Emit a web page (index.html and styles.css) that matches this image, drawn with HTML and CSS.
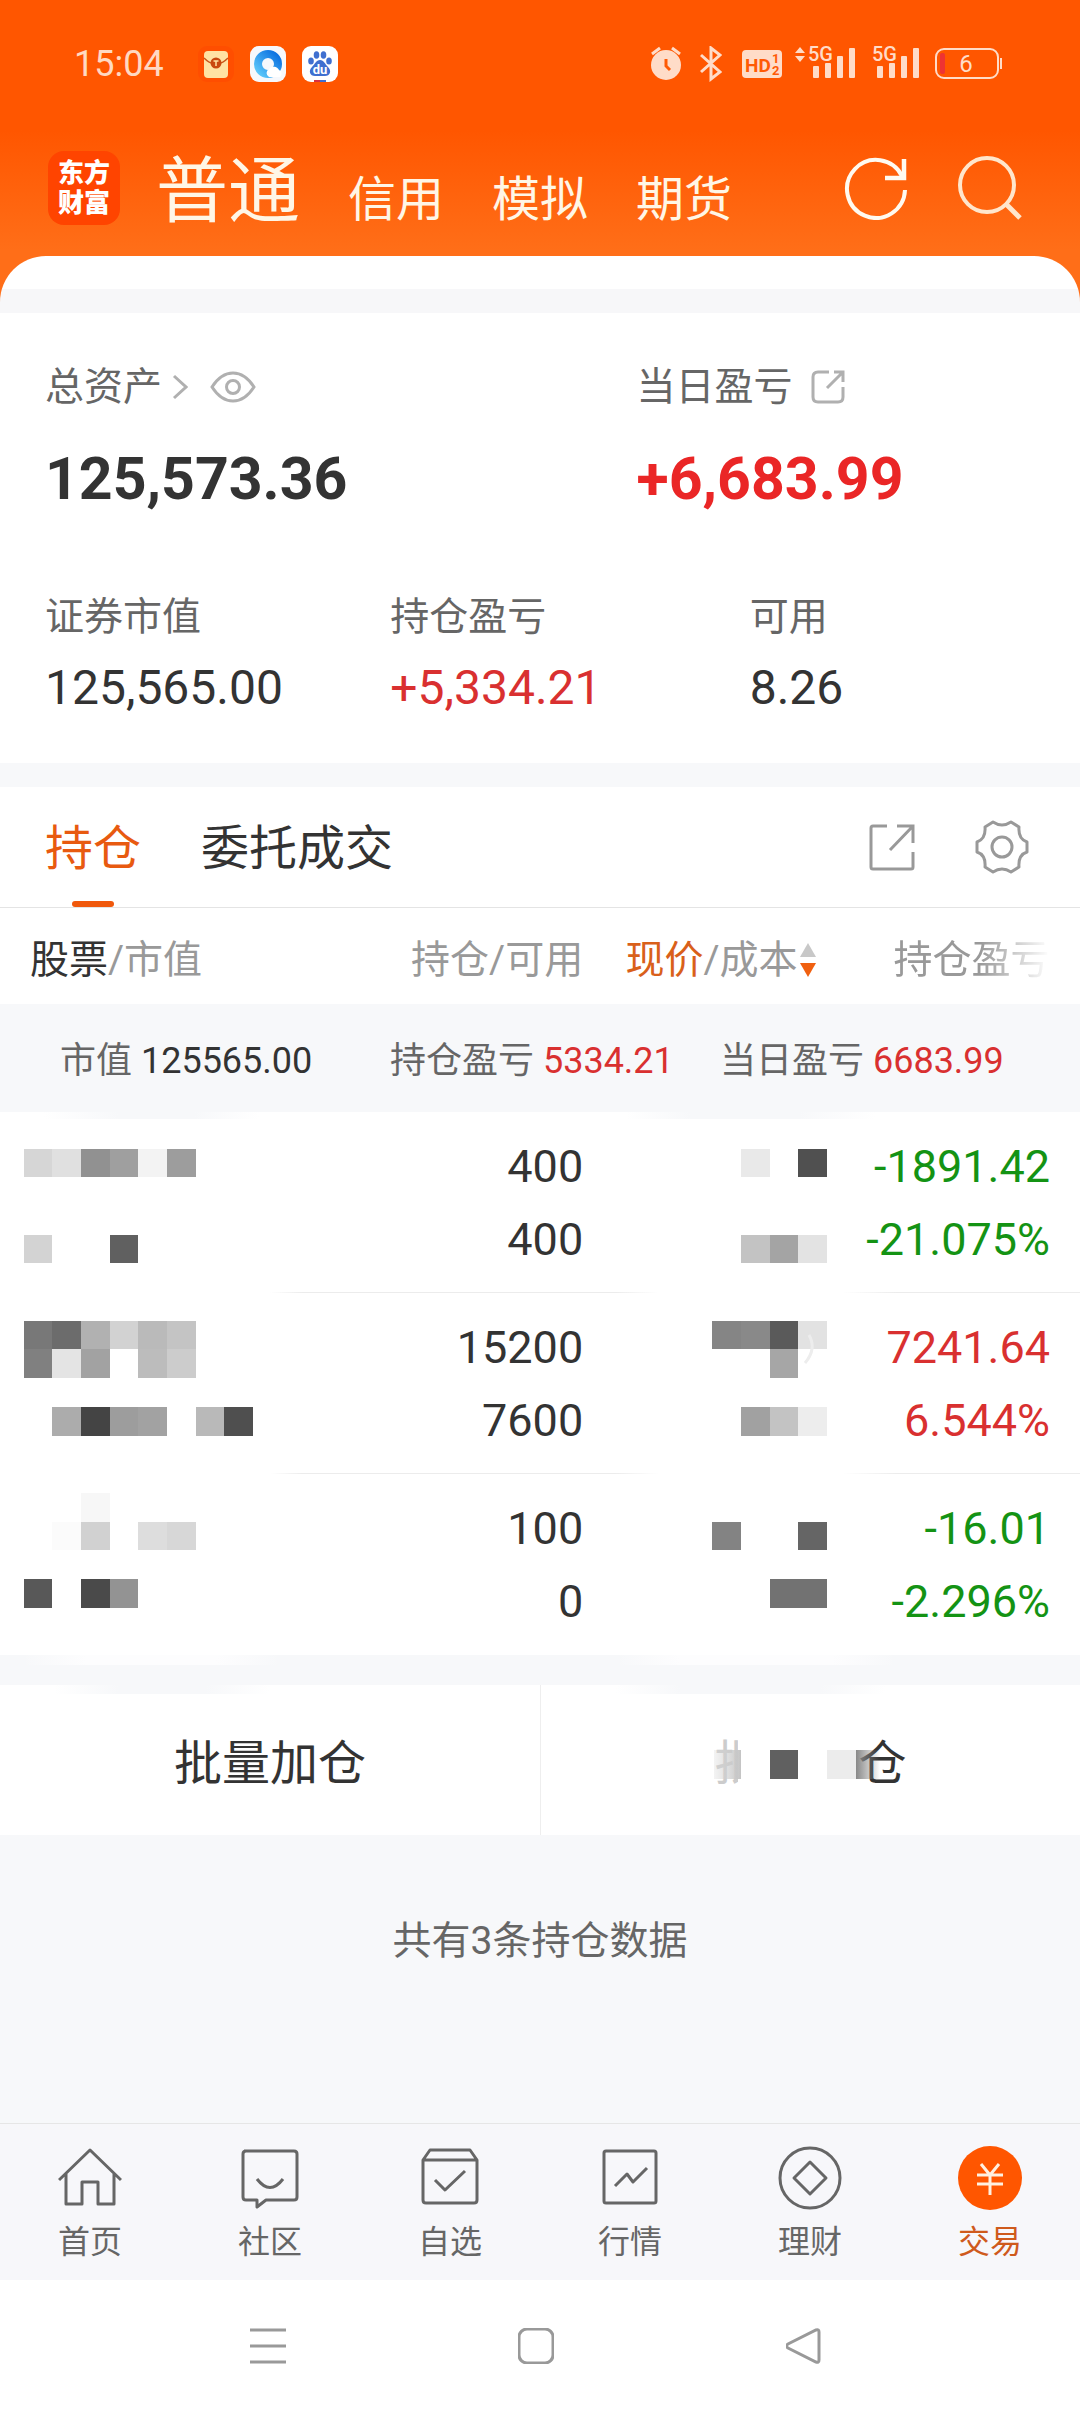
FILE: index.html
```html
<!DOCTYPE html>
<html lang="zh-CN">
<head>
    <meta charset="UTF-8">
    <meta name="viewport" content="width=device-width, initial-scale=1.0">
    <title>普通交易</title>
    <link rel="stylesheet" href="styles.css">
</head>
<body>
    <header class="top">
        <div class="status">
            <span class="clock">15:04</span>
            <div class="apps">
                <svg width="36" height="36" viewBox="0 0 36 36">
                    <rect width="36" height="36" rx="9" fill="#ff4e00"/>
                    <rect x="6" y="5" width="24" height="27" rx="4" fill="#ffe2a3"/>
                    <path d="M6 12q7 7 12 5q5 2 12-5" fill="none" stroke="#c9551a" stroke-width="1.5"/>
                    <circle cx="18" cy="17" r="5.5" fill="#c9480f"/>
                    <path d="M15.500 15h5M18 15v5" stroke="#ffe2a3" stroke-width="1.5"/>
                </svg>
                <svg width="36" height="36" viewBox="0 0 36 36">
                    <defs>
                        <linearGradient id="qq" x1="0" y1="1" x2="1" y2="0">
                            <stop offset="0" stop-color="#5cc8fa"/>
                            <stop offset="1" stop-color="#0a6fe0"/>
                        </linearGradient>
                    </defs>
                    <rect width="36" height="36" rx="9" fill="#f6f8fc"/>
                    <circle cx="18" cy="18" r="10" fill="none" stroke="url(#qq)" stroke-width="8"/>
                    <path d="M19 31a4.500 4.500 0 0 1 0-8a6 6 0 0 1 10 1a4 4 0 0 1 1 7z" fill="#fff"/>
                </svg>
                <svg width="36" height="36" viewBox="0 0 36 36">
                    <rect width="36" height="36" rx="9" fill="#fff"/>
                    <g fill="#3f6fd0">
                        <ellipse cx="9" cy="15" rx="2.800" ry="3.600"/>
                        <ellipse cx="14.500" cy="9" rx="2.800" ry="3.800"/>
                        <ellipse cx="21.500" cy="9" rx="2.800" ry="3.800"/>
                        <ellipse cx="27" cy="15" rx="2.800" ry="3.600"/>
                        <path d="M18 14c4 0 5 4 8 7c4 4 2 9-3 9H13c-5 0-7-5-3-9c3-3 4-7 8-7z"/>
                    </g>
                    <text x="18" y="28" class="du">du</text>
                    <path d="M12 35h6" stroke="#d83040" stroke-width="2"/>
                    <path d="M18 35h6" stroke="#3f6fd0" stroke-width="2"/>
                </svg>
            </div>
            <div class="signals">
                <svg width="32" height="36" viewBox="0 0 32 36">
                    <circle cx="16" cy="19" r="15" fill="#ffdcc8"/>
                    <path d="M2 8l8-6M30 8l-8-6" stroke="#ffdcc8" stroke-width="3"/>
                    <path d="M16 13v7l4 4" fill="none" stroke="#ff5a05" stroke-width="3"/>
                </svg>
                <svg width="22" height="36" viewBox="0 0 22 36">
                    <path d="M1 9l19 17-9 7V2l9 7L1 26" fill="none" stroke="#ffdcc8" stroke-width="3"/>
                </svg>
                <svg class="hd" width="40" height="36" viewBox="0 0 40 36">
                    <rect y="4" width="40" height="28" rx="4" fill="#ffdcc8"/>
                    <text x="3" y="26" class="hd-text">HD</text>
                    <text x="30" y="17" class="hd-num">1</text>
                    <text x="30" y="29" class="hd-num">2</text>
                </svg>
                <svg width="62" height="46" viewBox="0 -5 62 46">
                    <g fill="#ffdcc8">
                        <path d="M1 7l5-6 5 6zM1 10h10l-5 6z"/>
                        <rect x="19" y="20" width="6" height="12" rx="1"/>
                        <rect x="31" y="17" width="6" height="15" rx="1"/>
                        <rect x="43" y="10" width="6" height="22" rx="1"/>
                        <rect x="55" y="2" width="6" height="30" rx="1"/>
                    </g>
                    <text x="14" y="15" class="net">5G</text>
                </svg>
                <svg class="sim2" width="50" height="46" viewBox="12 -5 50 46">
                    <g fill="#ffdcc8">
                        <rect x="19" y="20" width="6" height="12" rx="1"/>
                        <rect x="31" y="17" width="6" height="15" rx="1"/>
                        <rect x="43" y="10" width="6" height="22" rx="1"/>
                        <rect x="55" y="2" width="6" height="30" rx="1"/>
                    </g>
                    <text x="14" y="15" class="net">5G</text>
                </svg>
                <svg width="68" height="36" viewBox="0 0 68 36">
                    <rect x="1" y="3" width="62" height="29" rx="8" fill="none" stroke="#ffdcc8" stroke-width="2"/>
                    <rect x="5" y="7" width="5" height="21" rx="2" fill="#ee3333"/>
                    <rect x="65" y="12" width="2" height="11" fill="#ffdcc8"/>
                    <text x="31" y="26" class="battery">6</text>
                </svg>
            </div>
        </div>
        <nav class="accounts">
            <div class="logo"><span>东方</span><span>财富</span></div>
            <div class="account-list">
                <a class="current" href="#">普通</a>
                <a href="#">信用</a>
                <a href="#">模拟</a>
                <a href="#">期货</a>
            </div>
            <button class="icon-btn">
                <svg width="64" height="64" viewBox="0 0 64 64" fill="none" stroke="#fffaf0" stroke-width="4">
                    <path d="M61 34a29 29 0 1 1-3-14"/>
                    <path d="M60 3v19H41" stroke-width="4.500"/>
                </svg>
            </button>
            <button class="icon-btn">
                <svg width="64" height="64" viewBox="0 0 64 64" fill="none" stroke="#ffe6cc" stroke-width="4">
                    <circle cx="29" cy="29" r="27"/>
                    <path d="M48 48l14 14" stroke-width="5"/>
                </svg>
            </button>
        </nav>
    </header>

    <main>
        <div class="sheet-top"></div>
        <section class="assets">
            <div class="totals">
                <div>
                    <div class="label">总资产
                        <svg class="chevron" width="16" height="26" viewBox="0 0 16 26"><path d="M2 2l12 11L2 24" fill="none" stroke="#b0b0b0" stroke-width="3"/></svg>
                        <svg class="eye" width="46" height="32" viewBox="0 0 46 32" fill="none" stroke="#b0b0b0" stroke-width="3">
                            <path d="M2 16Q11 2 23 2t21 14Q35 30 23 30T2 16z"/>
                            <circle cx="23" cy="16" r="6.500"/>
                        </svg>
                    </div>
                    <div class="big">125,573.36</div>
                </div>
                <div>
                    <div class="label">当日盈亏
                        <svg class="share" width="34" height="34" viewBox="0 0 34 34" fill="none" stroke="#b0b0b0" stroke-width="3">
                            <path d="M18 2H7Q2 2 2 7v20q0 5 5 5h20q5 0 5-5V17M16 18L31 3M23 2h9v10"/>
                        </svg>
                    </div>
                    <div class="big up">+6,683.99</div>
                </div>
            </div>
            <div class="details">
                <div>
                    <div class="label">证券市值</div>
                    <div class="value">125,565.00</div>
                </div>
                <div>
                    <div class="label">持仓盈亏</div>
                    <div class="value up">+5,334.21</div>
                </div>
                <div>
                    <div class="label">可用</div>
                    <div class="value">8.26</div>
                </div>
            </div>
        </section>

        <section class="holdings">
            <div class="tabs">
                <a class="tab active" href="#">持仓</a>
                <a class="tab" href="#">委托成交</a>
                <button class="icon-btn">
                    <svg width="46" height="48" viewBox="0 0 46 48" fill="none" stroke="#999" stroke-width="3">
                        <path d="M18 3H4Q2 3 2 5v39q0 2 2 2h38q2 0 2-2V29M21 27L44 3M28 3h16v17"/>
                    </svg>
                </button>
                <button class="icon-btn">
                    <svg width="54" height="54" viewBox="0 0 54 54" fill="none" stroke="#999" stroke-width="3" stroke-linejoin="round">
                        <path d="M18 2Q27 8 36 2L44 7Q43 19 52 22V32Q43 35 44 47L36 52Q27 46 18 52L10 47Q11 35 2 32V22Q11 19 10 7z"/>
                        <circle cx="27" cy="27" r="10"/>
                    </svg>
                </button>
            </div>
            <table>
                <colgroup>
                    <col class="col-name">
                    <col class="col-qty">
                    <col class="col-price">
                    <col>
                </colgroup>
                <thead>
                    <tr>
                        <th class="name"><b>股票</b>/市值</th>
                        <th>持仓/可用</th>
                        <th class="price"><em>现价</em>/成本<svg class="sort" width="16" height="36" viewBox="0 0 16 36"><path d="M0 15L8 1l8 14z" fill="#c8c8c8"/><path d="M0 21h16L8 35z" fill="#f06010"/></svg></th>
                        <th class="profit"><span>持仓盈亏</span></th>
                    </tr>
                </thead>
                <tbody>
                    <tr class="sum">
                        <td colspan="4">
                            <div class="sum-row">
                                <div>市值 <span>125565.00</span></div>
                                <div>持仓盈亏 <span class="up">5334.21</span></div>
                                <div>当日盈亏 <span class="up">6683.99</span></div>
                            </div>
                        </td>
                    </tr>
                    <tr class="stock first">
                        <td class="name">
                            <svg class="mosaic" width="232" height="180" viewBox="0 0 232 180" shape-rendering="crispEdges">
                                <rect x="0" y="36" width="28" height="28" fill="#d6d6d6"/>
                                <rect x="28" y="36" width="29" height="28" fill="#e0e0e0"/>
                                <rect x="57" y="36" width="29" height="28" fill="#919191"/>
                                <rect x="86" y="36" width="28" height="28" fill="#9f9f9f"/>
                                <rect x="114" y="36" width="29" height="28" fill="#f3f3f3"/>
                                <rect x="143" y="36" width="29" height="28" fill="#9d9d9d"/>
                                <rect x="0" y="122" width="28" height="28" fill="#d3d3d3"/>
                                <rect x="86" y="122" width="28" height="28" fill="#606060"/>
                            </svg>
                        </td>
                        <td>400<br>400</td>
                        <td class="price">
                            <svg class="mosaic" width="115" height="180" viewBox="0 0 115 180" shape-rendering="crispEdges">
                                <rect x="29" y="36" width="29" height="28" fill="#e9e9e9"/>
                                <rect x="86" y="36" width="29" height="28" fill="#505050"/>
                                <rect x="29" y="122" width="29" height="28" fill="#c3c3c3"/>
                                <rect x="58" y="122" width="28" height="28" fill="#a4a4a4"/>
                                <rect x="86" y="122" width="29" height="28" fill="#e3e3e3"/>
                            </svg>
                        </td>
                        <td class="profit down">-1891.42<br>-21.075%</td>
                    </tr>
                    <tr class="stock">
                        <td class="name">
                            <svg class="mosaic" width="232" height="180" viewBox="0 0 232 180" shape-rendering="crispEdges">
                                <rect x="0" y="27" width="28" height="28" fill="#787878"/>
                                <rect x="28" y="27" width="29" height="28" fill="#6c6c6c"/>
                                <rect x="57" y="27" width="29" height="28" fill="#b1b1b1"/>
                                <rect x="86" y="27" width="28" height="28" fill="#d2d2d2"/>
                                <rect x="114" y="27" width="29" height="28" fill="#bababa"/>
                                <rect x="143" y="27" width="29" height="28" fill="#c4c4c4"/>
                                <rect x="0" y="55" width="28" height="29" fill="#808080"/>
                                <rect x="28" y="55" width="29" height="29" fill="#e4e4e4"/>
                                <rect x="57" y="55" width="29" height="29" fill="#a2a2a2"/>
                                <rect x="114" y="55" width="29" height="29" fill="#bcbcbc"/>
                                <rect x="143" y="55" width="29" height="29" fill="#cccccc"/>
                                <rect x="28" y="113" width="29" height="29" fill="#acacac"/>
                                <rect x="57" y="113" width="29" height="29" fill="#444"/>
                                <rect x="86" y="113" width="28" height="29" fill="#9d9d9d"/>
                                <rect x="114" y="113" width="29" height="29" fill="#a2a2a2"/>
                                <rect x="172" y="113" width="28" height="29" fill="#b9b9b9"/>
                                <rect x="200" y="113" width="29" height="29" fill="#4f4f4f"/>
                            </svg>
                        </td>
                        <td>15200<br>7600</td>
                        <td class="price">
                            <svg class="mosaic" width="115" height="180" viewBox="0 0 115 180">
                                <rect x="0" y="27" width="29" height="28" fill="#858585"/>
                                <rect x="29" y="27" width="29" height="28" fill="#898989"/>
                                <rect x="58" y="27" width="28" height="28" fill="#5a5a5a"/>
                                <rect x="86" y="27" width="29" height="28" fill="#e2e2e2"/>
                                <rect x="58" y="55" width="28" height="29" fill="#a6a6a6"/>
                                <path d="M97 41q8 14-4 28" fill="none" stroke="#ededed" stroke-width="3"/>
                                <rect x="29" y="113" width="29" height="29" fill="#a1a1a1"/>
                                <rect x="58" y="113" width="28" height="29" fill="#c3c3c3"/>
                                <rect x="86" y="113" width="29" height="29" fill="#ededed"/>
                            </svg>
                        </td>
                        <td class="profit up">7241.64<br>6.544%</td>
                    </tr>
                    <tr class="stock last">
                        <td class="name">
                            <svg class="mosaic" width="232" height="180" viewBox="0 0 232 180" shape-rendering="crispEdges">
                                <rect x="57" y="18" width="29" height="29" fill="#f7f7f7"/>
                                <rect x="28" y="47" width="29" height="28" fill="#fbfbfb"/>
                                <rect x="57" y="47" width="29" height="28" fill="#d1d1d1"/>
                                <rect x="114" y="47" width="29" height="28" fill="#dddddd"/>
                                <rect x="143" y="47" width="29" height="28" fill="#d7d7d7"/>
                                <rect x="0" y="104" width="28" height="29" fill="#585858"/>
                                <rect x="57" y="104" width="29" height="29" fill="#4a4a4a"/>
                                <rect x="86" y="104" width="28" height="29" fill="#939393"/>
                            </svg>
                        </td>
                        <td>100<br>0</td>
                        <td class="price">
                            <svg class="mosaic" width="115" height="180" viewBox="0 0 115 180" shape-rendering="crispEdges">
                                <rect x="0" y="47" width="29" height="28" fill="#838383"/>
                                <rect x="86" y="47" width="29" height="28" fill="#656565"/>
                                <rect x="58" y="104" width="57" height="29" fill="#727272"/>
                            </svg>
                        </td>
                        <td class="profit down">-16.01<br>-2.296%</td>
                    </tr>
                </tbody>
            </table>
            <div class="gap"></div>
            <div class="actions">
                <button>批量加仓</button>
                <button>
                    <span class="covered">
                        <span class="faint">批</span><span class="blank"></span>仓
                        <svg class="cover" width="192" height="100" viewBox="0 0 192 100">
                            <defs>
                                <linearGradient id="fade"><stop offset="0" stop-color="#888"/><stop offset="1" stop-color="#888" stop-opacity="0"/></linearGradient>
                                <linearGradient id="pale"><stop offset="0" stop-color="#d8d8d8" stop-opacity=".3"/><stop offset="1" stop-color="#c4c4c4"/></linearGradient>
                            </defs>
                            <rect x="24" y="10" width="32" height="80" fill="#fff"/>
                            <rect x="0" y="40" width="27" height="29" fill="url(#pale)"/>
                            <rect x="56" y="40" width="28" height="29" fill="#606060"/>
                            <rect x="113" y="40" width="29" height="29" fill="#ececec"/>
                            <rect x="142" y="40" width="24" height="29" fill="url(#fade)"/>
                        </svg>
                    </span>
                </button>
            </div>
        </section>
        <p class="count">共有3条持仓数据</p>
    </main>

    <nav class="tabbar">
        <a href="#">
            <svg width="64" height="64" viewBox="0 0 64 64">
                <path d="M1 34L32 4l31 30M8 28v30h16V36h16v22h16V28"/>
            </svg>
            首页
        </a>
        <a href="#">
            <svg width="64" height="64" viewBox="0 0 64 64">
                <path d="M6 5h50q3 0 3 3v43q0 3-3 3H28l-9 7v-7H8q-3 0-3-3V8q0-3 3-3M19 33q13 17 26 0"/>
            </svg>
            社区
        </a>
        <a href="#">
            <svg width="64" height="64" viewBox="0 0 64 64">
                <path d="M5 14l7-10h40l7 10v40q0 3-3 3H8q-3 0-3-3zM5 14h54M17 34l10 10 20-19"/>
            </svg>
            自选
        </a>
        <a href="#">
            <svg width="64" height="64" viewBox="0 0 64 64">
                <rect x="6" y="5" width="52" height="52" rx="2"/>
                <path d="M17 40l12-12 6 8 14-14"/>
            </svg>
            行情
        </a>
        <a href="#">
            <svg width="64" height="64" viewBox="0 0 64 64">
                <circle cx="32" cy="32" r="30"/>
                <path d="M32 16l16 16-16 16-16-16z"/>
            </svg>
            理财
        </a>
        <a class="active" href="#">
            <svg width="64" height="64" viewBox="0 0 64 64">
                <circle class="disc" cx="32" cy="32" r="32"/>
                <path class="yen" d="M23 18l9 11 9-11M19 29h26M19 38h26M32 29v20"/>
            </svg>
            交易
        </a>
    </nav>
    <div class="system-nav">
        <svg width="36" height="36" viewBox="0 0 36 36"><path d="M0 2h36M0 18h36M0 34h36"/></svg>
        <svg width="36" height="36" viewBox="0 0 36 36"><rect x="1" y="1" width="34" height="34" rx="8"/></svg>
        <svg width="36" height="36" viewBox="0 0 36 36"><path d="M30 2q3-1 3 2v28q0 3-3 2L2 20q-3-2 0-4z"/></svg>
    </div>
</body>
</html>
```
FILE: styles.css
```css
* {
    box-sizing: border-box;
}
body {
    margin: 0;
    min-height: 100vh;
    display: flex;
    flex-direction: column;
    background-color: #f7f8fa;
    color: #333333;
    font-family: Roboto, "Noto Sans CJK SC", sans-serif;
    font-size: 39px;
}
svg {
    display: block;
    flex: none;
}
a {
    color: inherit;
    text-decoration: none;
}
button {
    border: none;
    padding: 0;
    background: none;
    color: inherit;
    font: inherit;
    cursor: pointer;
}
.up {
    color: #d93030;
}
.down {
    color: #149314;
}

/* header */
.top {
    padding-bottom: 54px;
    background: linear-gradient(#ff5600 130px, #ff6e18 250px);
}
.status {
    display: flex;
    align-items: center;
    height: 128px;
    padding: 0 77px 0 74px;
    color: #ffd9c2;
}
.clock {
    font-size: 36px;
}
.apps {
    display: flex;
    gap: 16px;
    margin-left: 34px;
}
.signals {
    display: flex;
    align-items: center;
    gap: 18px;
    margin-left: auto;
}
.signals .hd {
    margin: 0 -6px 0 2px;
}
.signals .sim2 {
    margin: 0 -3px 0 -4px;
}
.du {
    font-size: 13px;
    font-weight: 700;
    fill: #ffffff;
    text-anchor: middle;
}
.hd-text {
    font-size: 19px;
    font-weight: 700;
    fill: #ff5a05;
}
.hd-num {
    font-size: 13px;
    font-weight: 700;
    fill: #ff5a05;
}
.net {
    font-size: 20px;
    font-weight: 500;
    fill: #ffdcc8;
}
.battery {
    font-size: 24px;
    fill: #ffdcc8;
    text-anchor: middle;
}
.accounts {
    display: flex;
    align-items: center;
    height: 120px;
    padding: 0 58px 0 48px;
    color: #fff6e6;
}
.logo {
    display: flex;
    flex-direction: column;
    justify-content: center;
    width: 72px;
    height: 74px;
    border-radius: 16px;
    background-color: #ff4400;
    color: #ffffff;
    font-size: 26px;
    font-weight: 900;
    line-height: 30px;
    text-align: center;
}
.account-list {
    display: flex;
    align-items: baseline;
    gap: 48px;
    margin: 0 auto 0 36px;
    padding-top: 16px;
    font-size: 48px;
    line-height: 96px;
}
.account-list .current {
    font-size: 72px;
}
.accounts .icon-btn {
    margin-left: 50px;
}

/* assets */
.sheet-top {
    height: 57px;
    margin-top: -46px;
    border-radius: 46px 46px 0 0;
    background: linear-gradient(#ffffff 33px, #f7f7f9 33px);
}
.assets {
    padding: 49px 46px 46px 45px;
    background-color: #ffffff;
}
.label {
    display: flex;
    align-items: center;
    color: #666666;
    line-height: 50px;
}
.chevron {
    margin-left: 10px;
}
.eye {
    margin-left: 22px;
}
.share {
    margin-left: 18px;
}
.totals {
    display: grid;
    grid-template-columns: 591fr 397fr;
}
.big {
    margin-top: 32px;
    font-size: 59px;
    font-weight: 700;
    line-height: 70px;
}
.big.up {
    color: #ea2626;
}
.details {
    display: grid;
    grid-template-columns: 345fr 359fr 284fr;
    margin-top: 78px;
}
.value {
    margin-top: 17px;
    font-size: 48px;
    line-height: 58px;
}

/* holdings */
.holdings {
    margin-top: 24px;
}
.tabs {
    display: flex;
    align-items: center;
    gap: 60px;
    height: 121px;
    padding: 0 51px 0 45px;
    border-bottom: 1px solid #e4e4e4;
    background-color: #ffffff;
    font-size: 48px;
    line-height: 120px;
}
.tab {
    padding-top: 4px;
}
.tab.active {
    position: relative;
    color: #e85a10;
}
.tab.active::after {
    content: "";
    position: absolute;
    left: 50%;
    bottom: 2px;
    width: 42px;
    height: 6px;
    margin-left: -21px;
    border-radius: 3px;
    background-color: #f0580c;
}
.tab + .icon-btn {
    margin-left: auto;
}
table {
    width: 100%;
    table-layout: fixed;
    border-collapse: collapse;
    background-color: #ffffff;
}
.col-name {
    width: 28%;
}
.col-qty {
    width: 26%;
}
.col-price {
    width: 23%;
}
th,
td {
    padding: 0;
    text-align: right;
    white-space: nowrap;
}
th {
    height: 96px;
    color: #999999;
    font-weight: 400;
}
th.name {
    padding-left: 30px;
    text-align: left;
}
th b {
    color: #333333;
    font-weight: 400;
}
th em {
    color: #d9601a;
    font-style: normal;
}
th.price {
    padding-right: 16px;
}
.sort {
    display: inline-block;
    margin: -6px 0 0 2px;
    vertical-align: middle;
}
th.profit {
    padding-left: 62px;
    text-align: left;
}
th.profit span {
    -webkit-mask-image: linear-gradient(90deg, #000 55%, transparent);
    mask-image: linear-gradient(90deg, #000 55%, transparent);
}
.sum td {
    height: 108px;
    background-color: #f7f8fa;
    text-align: left;
}
.sum-row {
    display: grid;
    grid-template-columns: repeat(3, 1fr);
    padding: 0 30px 2px 60px;
    color: #666666;
    font-size: 36px;
}
.sum-row span {
    color: #333333;
}
.sum-row .up {
    color: #d93030;
}
.stock {
    height: 181px;
    background: linear-gradient(90deg, transparent 25%, #ececec 28%, #ececec 57%, transparent 61%, transparent 78%, #ececec 83%) bottom / 100% 1px no-repeat;
}
.stock.first {
    background:
        linear-gradient(90deg, transparent 4%, #f7f8fa 11%, #f7f8fa 18%, transparent 24%, transparent 58%, #f7f8fa 64%, #f7f8fa 74%, transparent 81%) top / 100% 7px no-repeat,
        linear-gradient(90deg, transparent 25%, #ececec 28%, #ececec 57%, transparent 61%, transparent 78%, #ececec 83%) bottom / 100% 1px no-repeat;
}
.stock.last {
    background: none;
}
.stock td {
    padding-top: 1px;
    font-size: 45px;
    line-height: 73px;
}
.stock .name {
    padding-left: 24px;
}
.stock .price {
    padding-right: 5px;
}
.stock .profit {
    padding-right: 30px;
}
.mosaic {
    margin-left: auto;
}
.name .mosaic {
    margin-left: 0;
}
.gap {
    height: 30px;
    background: linear-gradient(90deg, transparent 2%, #fdfdfe 8%, #fdfdfe 20%, transparent 26%, transparent 57%, #fdfdfe 63%, #fdfdfe 77%, transparent 83%) top / 100% 10px no-repeat;
}
.actions {
    display: grid;
    grid-template-columns: 1fr 1fr;
    height: 150px;
    background:
        linear-gradient(90deg, transparent 5%, #f7f8fa 11%, #f7f8fa 19%, transparent 25%, transparent 57%, #f7f8fa 63%, #f7f8fa 76%, transparent 82%) top / 100% 9px no-repeat,
        #ffffff;
    font-size: 48px;
}
.actions button {
    padding-bottom: 3px;
}
.actions button + button {
    border-left: 1px solid #eeeeee;
}
.covered {
    display: inline-flex;
    position: relative;
}
.faint {
    color: #cccccc;
}
.blank {
    width: 96px;
}
.cover {
    position: absolute;
    left: 0;
    top: -14px;
}
.count {
    margin: 76px 0;
    color: #666666;
    line-height: 60px;
    text-align: center;
}

/* bottom bars */
.tabbar {
    display: grid;
    grid-template-columns: repeat(6, 1fr);
    height: 157px;
    margin-top: auto;
    padding-top: 22px;
    border-top: 1px solid #e6e6e6;
    background-color: #f7f7fa;
    color: #666666;
    font-size: 32px;
    line-height: 40px;
}
.tabbar a {
    display: flex;
    flex-direction: column;
    align-items: center;
    gap: 12px;
}
.tabbar svg {
    fill: none;
    stroke: #666666;
    stroke-width: 3;
    stroke-linejoin: round;
}
.tabbar .active {
    color: #cf5a1c;
}
.tabbar .disc {
    fill: #ff5600;
    stroke: none;
}
.tabbar .yen {
    stroke: #fff0e0;
}
.system-nav {
    display: grid;
    grid-template-columns: repeat(3, 1fr);
    align-items: center;
    justify-items: center;
    height: 132px;
    padding: 0 142px 0 134px;
    background-color: #ffffff;
}
.system-nav svg {
    fill: none;
    stroke: #999999;
    stroke-width: 3;
}
```
